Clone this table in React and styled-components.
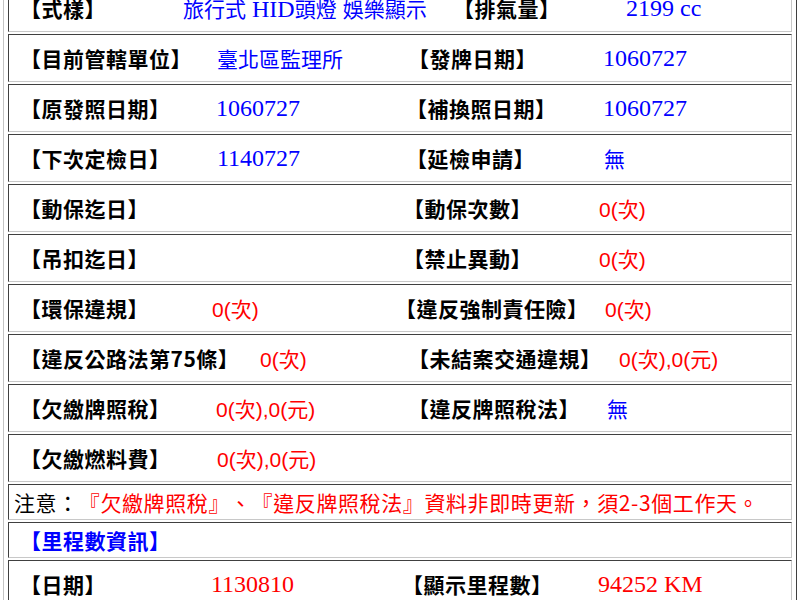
import React from 'react'
import styled, { createGlobalStyle } from 'styled-components'

const GlobalStyle = createGlobalStyle`
  html, body {
    margin: 0;
    padding: 0;
    background: #fff;
    overflow: hidden;
    text-spacing-trim: space-all;
  }
`

const CJK = `"Noto Sans CJK TC", "Noto Sans CJK SC", sans-serif`

const Frame = styled.div`
  box-sizing: border-box;
  width: 794px;
  margin: -21px 0 0 3px;
  padding: 4px;
  border: 1px solid;
  border-color: #c4c4c4 #404040 #404040 #c4c4c4;
  display: flex;
  flex-direction: column;
  gap: 2px;
`

const Cell = styled.div`
  box-sizing: border-box;
  height: ${p => p.$h || 48}px;
  border: 1px solid;
  border-color: #404040 #c8c8c8 #c8c8c8 #404040;
  display: flex;
  align-items: center;
  padding-left: ${p => p.$pad ?? 18}px;
  white-space: nowrap;
  overflow: hidden;
`

const FieldGrid = styled.div`
  display: grid;
  grid-template-columns: ${p => p.$cols};
  align-items: center;
  width: 100%;
`

const Label = styled.span`
  font-family: ${CJK};
  font-weight: 700;
  font-size: 21px;
  letter-spacing: 0.5px;
  color: ${p => p.$color || '#000'};
  margin-left: -7px;
`

const Value = styled.span`
  font-family: ${p => (p.$serif ? `"Liberation Serif", ${CJK}` : `"Liberation Sans", ${CJK}`)};
  font-size: ${p => (p.$serif ? 24 : 21)}px;
  color: ${p => (p.$red ? '#ff0000' : '#0000ff')};
`

const Cjk = styled.span`
  font-family: ${CJK};
  font-size: 21px;
`

const Note = styled.span`
  font-family: ${CJK};
  font-size: 21px;
  letter-spacing: 0.6px;
  color: #000;

  em {
    font-style: normal;
    color: #ff0000;
  }
`

const rows = [
  {
    l1: '式樣',
    v1: (
      <Value $serif>
        <Cjk>旅行式</Cjk> HID<Cjk>頭燈</Cjk> <Cjk>娛樂顯示</Cjk>
      </Value>
    ),
    l2: '排氣量',
    v2: <Value $serif>2199 cc</Value>,
    cols: [183, 460, 626],
  },
  {
    l1: '目前管轄單位',
    v1: <Value>臺北區監理所</Value>,
    l2: '發牌日期',
    v2: <Value $serif>1060727</Value>,
    cols: [217, 415, 603],
  },
  {
    l1: '原發照日期',
    v1: <Value $serif>1060727</Value>,
    l2: '補換照日期',
    v2: <Value $serif>1060727</Value>,
    cols: [216, 413, 603],
  },
  {
    l1: '下次定檢日',
    v1: <Value $serif>1140727</Value>,
    l2: '延檢申請',
    v2: <Value>無</Value>,
    cols: [217, 413, 604],
  },
  {
    l1: '動保迄日',
    v1: null,
    l2: '動保次數',
    v2: <Value $red>0(次)</Value>,
    cols: [217, 410, 599],
  },
  {
    l1: '吊扣迄日',
    v1: null,
    l2: '禁止異動',
    v2: <Value $red>0(次)</Value>,
    cols: [217, 410, 599],
  },
  {
    l1: '環保違規',
    v1: <Value $red>0(次)</Value>,
    l2: '違反強制責任險',
    v2: <Value $red>0(次)</Value>,
    cols: [212, 402, 605],
  },
  {
    l1: '違反公路法第75條',
    v1: <Value $red>0(次)</Value>,
    l2: '未結案交通違規',
    v2: <Value $red>0(次),0(元)</Value>,
    cols: [260, 415, 619],
  },
  {
    l1: '欠繳牌照稅',
    v1: <Value $red>0(次),0(元)</Value>,
    l2: '違反牌照稅法',
    v2: <Value>無</Value>,
    cols: [216, 415, 607],
  },
  {
    l1: '欠繳燃料費',
    v1: <Value $red>0(次),0(元)</Value>,
    cols: [217, 415, 607],
  },
]

const START = 27

const toTemplate = cols => {
  const [a, b, c] = cols
  return `${a - START}px ${b - a}px ${c - b}px 1fr`
}

const FieldRow = ({ l1, v1, l2, v2, cols }) => (
  <Cell>
    <FieldGrid $cols={toTemplate(cols)}>
      <Label>【{l1}】</Label>
      <span>{v1}</span>
      {l2 ? <Label>【{l2}】</Label> : <span />}
      <span>{v2}</span>
    </FieldGrid>
  </Cell>
)

export default function App() {
  return (
    <>
      <GlobalStyle />
      <Frame>
        {rows.map(r => (
          <FieldRow key={r.l1} {...r} />
        ))}
        <Cell $h={36} $pad={5}>
          <Note>
            注意：<em>『欠繳牌照稅』、『違反牌照稅法』資料非即時更新，須2-3個工作天。</em>
          </Note>
        </Cell>
        <Cell $h={36}>
          <Label $color="#0000ff">【里程數資訊】</Label>
        </Cell>
        <FieldRow
          l1="日期"
          v1={<Value $serif $red>1130810</Value>}
          l2="顯示里程數"
          v2={<Value $serif $red>94252 KM</Value>}
          cols={[211, 409, 598]}
        />
      </Frame>
    </>
  )
}
